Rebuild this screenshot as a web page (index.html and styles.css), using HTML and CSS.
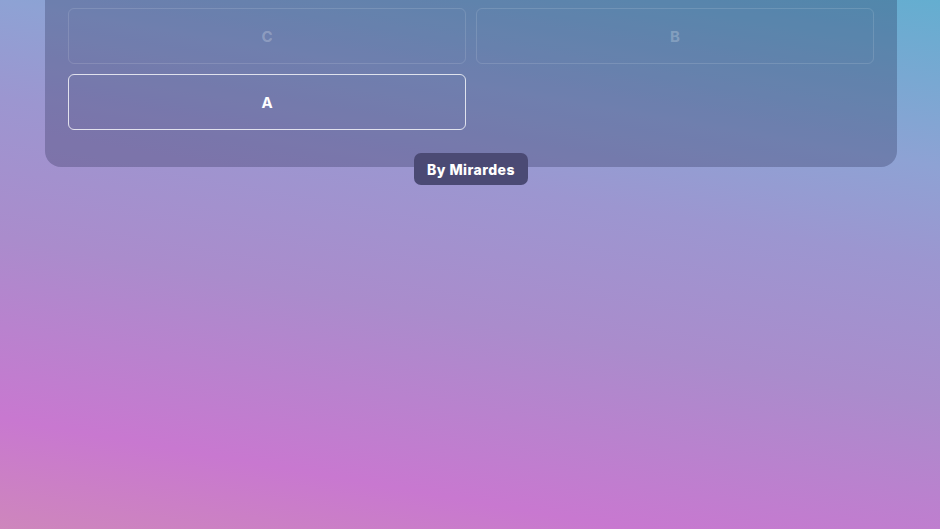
FILE: index.html
```html
<!DOCTYPE html>
<html lang="en">
<head>
<meta charset="utf-8">
<title>Quiz</title>
<link rel="stylesheet" href="styles.css">
</head>
<body>
  <main class="page">
    <section class="card">
      <div class="options">
        <button class="option disabled">C</button>
        <button class="option disabled">B</button>
        <button class="option active">A</button>
      </div>
    </section>
    <div class="credit">By Mirardes</div>
  </main>
</body>
</html>
```
FILE: styles.css
```css
html, body {
  margin: 0;
  padding: 0;
  height: 100%;
}
body {
  background: linear-gradient(10deg, #ce86bc 0%, #c878d0 16%, #aa8ccc 42%, #9c96d0 62%, #8ea2d4 76%, #64aed0 100%);
  font-family: Inter, "Open Sans", sans-serif;
  overflow: hidden;
}
.page {
  display: flex;
  flex-direction: column;
  align-items: center;
}
.card {
  box-sizing: border-box;
  width: 852px;
  margin-left: 2px;
  padding: 8px 23px 37px;
  background: rgba(24, 28, 64, 0.26);
  border-radius: 0 0 16px 16px;
}
.options {
  display: grid;
  grid-template-columns: 1fr 1fr;
  gap: 10px;
}
.option {
  height: 56px;
  padding-top: 2px;
  border-radius: 6px;
  background: transparent;
  font-family: Inter, "Open Sans", sans-serif;
  font-size: 15px;
  font-weight: 700;
  cursor: pointer;
}
.option.disabled {
  border: 1px solid rgba(255, 255, 255, 0.13);
  color: rgba(255, 255, 255, 0.24);
}
.option.active {
  border: 1.5px solid rgba(255, 255, 255, 0.78);
  color: #ffffff;
}
.credit {
  margin-top: -14px;
  margin-left: 2px;
  height: 32px;
  padding: 0 13px;
  display: flex;
  align-items: center;
  background: #4b4a74;
  color: #ffffff;
  border-radius: 7px;
  font-size: 14px;
  font-weight: 800;
  letter-spacing: 0.45px;
}
```
